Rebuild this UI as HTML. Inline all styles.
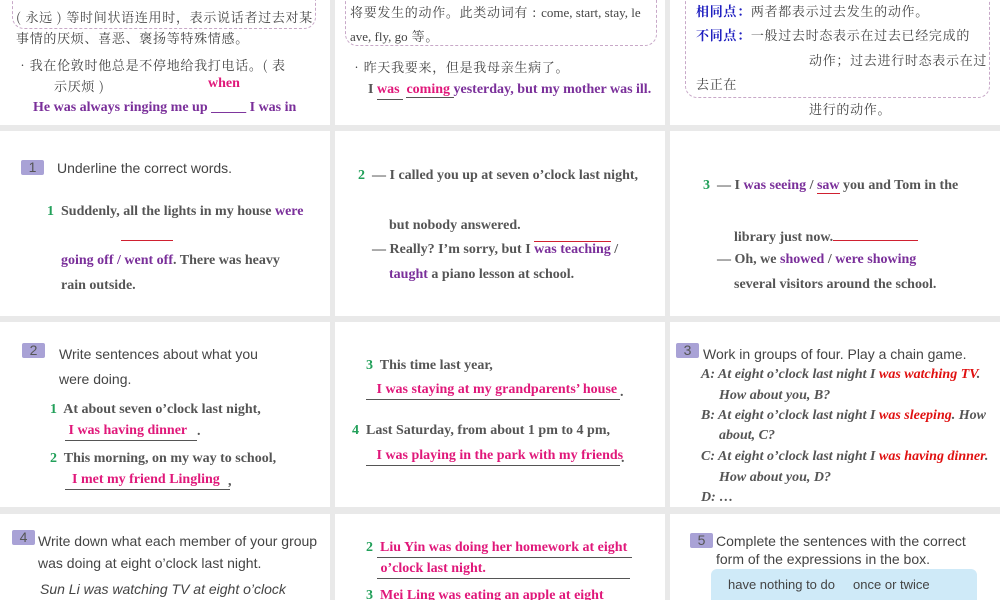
<!DOCTYPE html>
<html><head><meta charset="utf-8"><style>
body{margin:0;width:1000px;height:600px;background:#e9e9e9;position:relative;overflow:hidden;font-family:"Liberation Serif","Noto Serif CJK SC",serif;color:#555}
.p{position:absolute;background:#fff;overflow:hidden}
.t{position:absolute;white-space:nowrap;font-size:14px;font-weight:bold;line-height:18px}
.cn{position:absolute;white-space:nowrap;font-size:13px;letter-spacing:0.7px;line-height:18px;font-family:"Noto Serif CJK SC","WenQuanYi Zen Hei",serif;color:#444}
.s{position:absolute;white-space:nowrap;font-family:"Liberation Sans",sans-serif;font-size:14px;line-height:18px;color:#444}
.n{position:absolute;background:#a9a2d6;color:#555;font-family:"Liberation Sans",sans-serif;font-size:14px;text-align:center;border-radius:2px;line-height:15px;width:23px;height:15px}
.pu{color:#7a2f9a}.pk{color:#e0187a}.g{color:#22a05a}.rd{color:#e01010}.bl{color:#2020c0}
.u{border-bottom:1px solid #555}
.ru{border-bottom:1px solid #d02030}
.dash{position:absolute;border:1px dashed #c8a8c8;border-radius:12px}
i{font-style:italic}
</style></head><body>
<div class="p" style="left:0;top:0;width:330px;height:125px">
<div class="dash" style="left:12px;top:-20px;width:302px;height:47px"></div>
<div class="cn" style="left:16px;top:8px">( 永远 ) 等时间状语连用时，表示说话者过去对某</div>
<div class="cn" style="left:16px;top:29px">事情的厌烦、喜恶、褒扬等特殊情感。</div>
<div class="cn" style="left:16px;top:56px">•我在伦敦时他总是不停地给我打电话。( 表</div>
<div class="cn" style="left:54px;top:77px">示厌烦 )</div>
<div class="t pk" style="left:208px;top:75px">when</div>
<div class="t pu" style="left:33px;top:99px">He was always ringing me up _____ I was in</div>
</div>
<div class="p" style="left:335px;top:0;width:330px;height:125px">
<div class="dash" style="left:10px;top:-20px;width:310px;height:64px"></div>
<div class="cn" style="left:15px;top:3px">将要发生的动作。此类动词有 : <span style="font-family:'Liberation Serif';letter-spacing:0">come, start, stay, le</span></div>
<div class="cn" style="left:15px;top:27px"><span style="font-family:'Liberation Serif';letter-spacing:0">ave, fly, go</span> 等。</div>
<div class="cn" style="left:15px;top:58px">•昨天我要来，但是我母亲生病了。</div>
<div class="t pu" style="left:33px;top:81px"><span style="color:#555">I</span> <span class="pk u" style="display:inline-block;width:26px">was</span> <span class="pk u">coming </span> yesterday, but my mother was ill.</div>
</div>
<div class="p" style="left:670px;top:0;width:330px;height:125px">
<div class="dash" style="left:15px;top:-20px;width:303px;height:116px"></div>
<div class="cn" style="left:26px;top:2px"><b class="bl">相同点：</b>两者都表示过去发生的动作。</div>
<div class="cn" style="left:26px;top:26px"><b class="bl">不同点：</b>一般过去时态表示在过去已经完成的</div>
<div class="cn" style="left:139px;top:51px">动作；过去进行时态表示在过</div>
<div class="cn" style="left:26px;top:75px">去正在</div>
<div class="cn" style="left:139px;top:100px">进行的动作。</div>
</div>
<div class="p" style="left:0;top:131px;width:330px;height:185px">
<div class="n" style="left:21px;top:29px">1</div>
<div class="s" style="left:57px;top:28px">Underline the correct words.</div>
<div class="t" style="left:47px;top:72px"><span class="g">1</span>&nbsp; Suddenly, all the lights in my house <span class="pu">were</span></div>
<div style="position:absolute;left:121px;top:109px;width:52px;border-top:1px solid #d02030"></div>
<div class="t pu" style="left:61px;top:121px">going off / went off<span style="color:#555">. There was heavy</span></div>
<div class="t" style="left:61px;top:146px">rain outside.</div>
</div>
<div class="p" style="left:335px;top:131px;width:330px;height:185px">
<div class="t" style="left:23px;top:36px"><span class="g">2</span>&nbsp; — I called you up at seven o’clock last night,</div>
<div class="t" style="left:54px;top:86px">but nobody answered.</div>
<div class="t" style="left:37px;top:110px">— Really? I’m sorry, but I <span class="pu" style="border-top:1px solid #d02030">was teaching</span> /</div>
<div class="t pu" style="left:54px;top:135px">taught <span style="color:#555">a piano lesson at school.</span></div>
</div>
<div class="p" style="left:670px;top:131px;width:330px;height:185px">
<div class="t" style="left:33px;top:46px"><span class="g">3</span>&nbsp; — I <span class="pu">was seeing</span> / <span class="pu ru">saw</span> you and Tom in the</div>
<div class="t" style="left:64px;top:96px">library just now.<span style="display:inline-block;width:85px;border-bottom:1px solid #d02030;height:13px"></span></div>
<div class="t" style="left:47px;top:120px">— Oh, we <span class="pu">showed</span> / <span class="pu">were showing</span></div>
<div class="t" style="left:64px;top:145px">several visitors around the school.</div>
</div>
<div class="p" style="left:0;top:322px;width:330px;height:185px">
<div class="n" style="left:22px;top:21px">2</div>
<div class="s" style="left:59px;top:23px">Write sentences about what you</div>
<div class="s" style="left:59px;top:48px">were doing.</div>
<div class="t" style="left:50px;top:79px"><span class="g">1</span>&nbsp; At about seven o’clock last night,</div>
<div class="t pk u" style="left:65px;top:100px;width:132px">&nbsp;I was having dinner</div><div class="t" style="left:197px;top:101px">.</div>
<div class="t" style="left:50px;top:128px"><span class="g">2</span>&nbsp; This morning, on my way to school,</div>
<div class="t pk u" style="left:65px;top:149px;width:165px">&nbsp; I met my friend Lingling</div><div class="t" style="left:228px;top:151px">,</div>
</div>
<div class="p" style="left:335px;top:322px;width:330px;height:185px">
<div class="t" style="left:31px;top:35px"><span class="g">3</span>&nbsp; This time last year,</div>
<div class="t pk u" style="left:31px;top:59px;width:254px">&nbsp;&nbsp; I was staying at my grandparents’ house</div><div class="t" style="left:285px;top:62px">.</div>
<div class="t" style="left:17px;top:100px"><span class="g">4</span>&nbsp; Last Saturday, from about 1 pm to 4 pm,</div>
<div class="t pk u" style="left:31px;top:125px;width:254px">&nbsp;&nbsp;&nbsp;I was playing in the park with my friends</div><div class="t" style="left:286px;top:128px">.</div>
</div>
<div class="p" style="left:670px;top:322px;width:330px;height:185px">
<div class="n" style="left:6px;top:21px">3</div>
<div class="s" style="left:33px;top:23px">Work in groups of four. Play a chain game.</div>
<div class="t" style="left:31px;top:44px"><i>A: At eight o’clock last night I <span class="rd">was watching TV</span>.</i></div>
<div class="t" style="left:49px;top:65px"><i>How about you, B?</i></div>
<div class="t" style="left:31px;top:85px"><i>B: At eight o’clock last night I <span class="rd">was sleeping</span>. How</i></div>
<div class="t" style="left:49px;top:105px"><i>about, C?</i></div>
<div class="t" style="left:31px;top:126px"><i>C: At eight o’clock last night I <span class="rd">was having dinner</span>.</i></div>
<div class="t" style="left:49px;top:147px"><i>How about you, D?</i></div>
<div class="t" style="left:31px;top:167px"><i>D: …</i></div>
</div>
<div class="p" style="left:0;top:514px;width:330px;height:86px">
<div class="n" style="left:12px;top:16px">4</div>
<div class="s" style="left:38px;top:18px">Write down what each member of your group</div>
<div class="s" style="left:38px;top:40px">was doing at eight o’clock last night.</div>
<div class="s" style="left:40px;top:66px;font-style:italic">Sun Li was watching TV at eight o’clock</div>
</div>
<div class="p" style="left:335px;top:514px;width:330px;height:86px">
<div class="t" style="left:31px;top:25px"><span class="g">2</span> <span class="pk u" style="display:inline-block;width:255px">&nbsp;Liu Yin was doing her homework at eight</span></div>
<div class="t pk u" style="left:42px;top:46px;width:253px">&nbsp;o’clock last night.</div>
<div class="t" style="left:31px;top:73px"><span class="g">3</span>&nbsp; <span class="pk">Mei Ling was eating an apple at eight</span></div>
</div>
<div class="p" style="left:670px;top:514px;width:330px;height:86px">
<div class="n" style="left:20px;top:19px">5</div>
<div class="s" style="left:46px;top:18px">Complete the sentences with the correct</div>
<div class="s" style="left:46px;top:36px">form of the expressions in the box.</div>
<div style="position:absolute;left:41px;top:55px;width:266px;height:40px;background:#cfeaf8;border-radius:6px"></div>
<div class="s" style="left:58px;top:62px;font-size:13px">have nothing to do &nbsp;&nbsp;&nbsp; once or twice</div>
</div>
</body></html>
